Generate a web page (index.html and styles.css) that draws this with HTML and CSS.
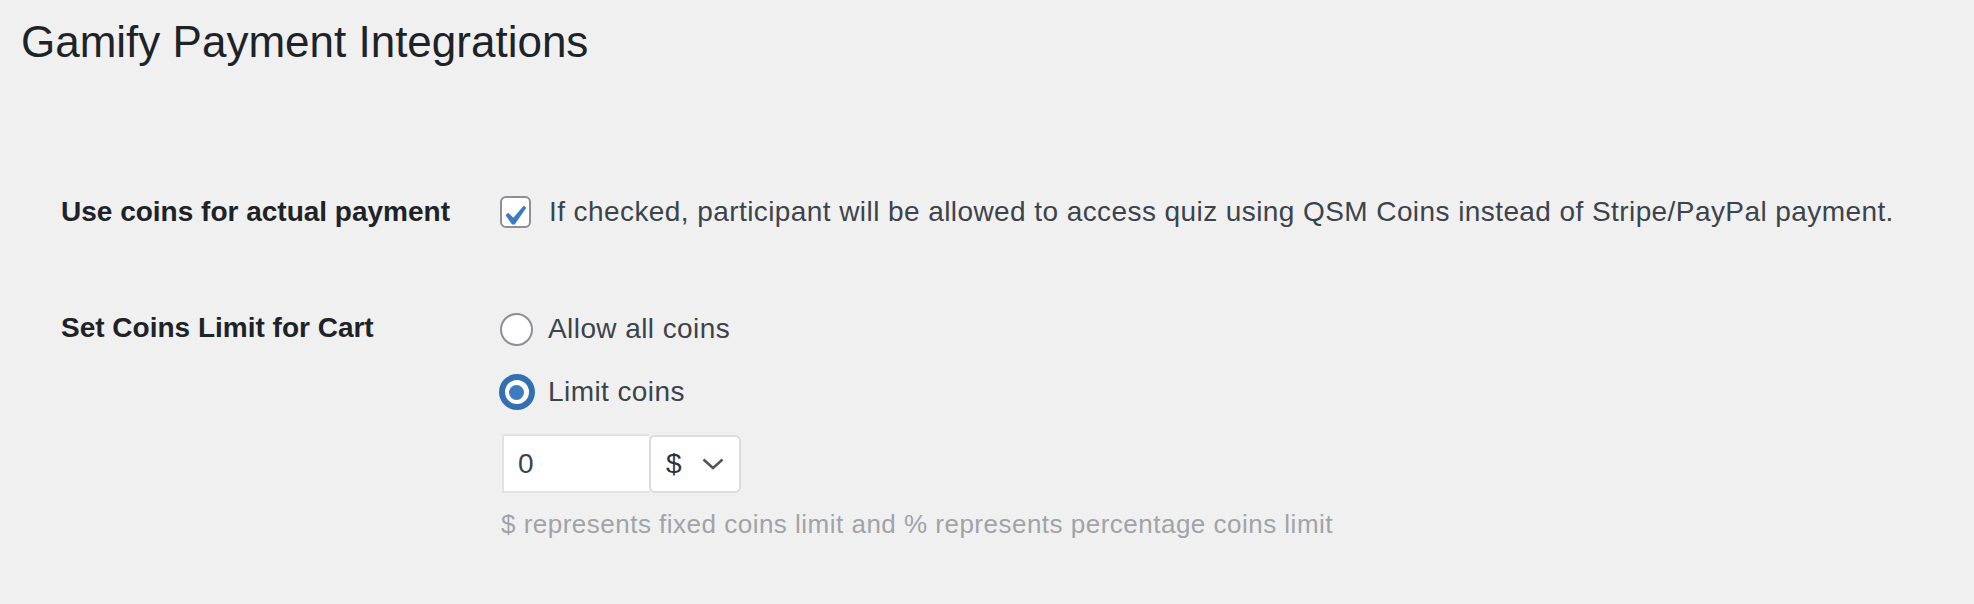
FILE: index.html
```html
<!DOCTYPE html>
<html lang="en">
<head>
<meta charset="utf-8">
<title>Gamify Payment Integrations</title>
<link rel="stylesheet" href="styles.css">
</head>
<body>
<div class="wrap">
  <h1 class="title">Gamify Payment Integrations</h1>
  <div class="form">
    <div class="row row-first">
      <div class="label">Use coins for actual payment</div>
      <div class="field">
        <label class="check">
          <span class="checkbox">
            <svg viewBox="0 0 20 20" width="40" height="40" aria-hidden="true"><path d="M14.83 4.89l1.34.94-5.81 8.38H9.02L5.78 9.67l1.34-1.25 2.57 2.4z" fill="#3a7bc2"/></svg>
          </span>
          <span class="text">If checked, participant will be allowed to access quiz using QSM Coins instead of Stripe/PayPal payment.</span>
        </label>
      </div>
    </div>
    <div class="row row-second">
      <div class="label">Set Coins Limit for Cart</div>
      <div class="field stack">
        <label class="option"><span class="radio"></span><span class="text">Allow all coins</span></label>
        <label class="option"><span class="radio checked"><span class="dot"></span></span><span class="text">Limit coins</span></label>
        <div class="group">
          <div class="input">0</div>
          <div class="select"><span class="sym">$</span>
            <svg class="chev" viewBox="0 0 22 12" width="22" height="12" aria-hidden="true"><path d="M1.5 1.5 L11 10 L20.5 1.5" fill="none" stroke="#50575e" stroke-width="2.6"/></svg>
          </div>
        </div>
        <div class="hint">$ represents fixed coins limit and % represents percentage coins limit</div>
      </div>
    </div>
  </div>
</div>
</body>
</html>
```
FILE: styles.css
```css
html, body {
  margin: 0;
  background: #f0f0f1;
}
body {
  font-family: "Liberation Sans", Arial, sans-serif;
  color: #3c434a;
  width: 1974px;
  height: 604px;
  overflow: hidden;
}
.wrap {
  padding: 12px 0 0 21px;
}
.title {
  margin: 0;
  font-size: 44px;
  line-height: 60px;
  font-weight: 400;
  color: #1d2327;
}
.form {
  margin: 120px 0 0 40px;
}
.row {
  display: grid;
  grid-template-columns: 440px 1fr;
}
.row-second {
  margin-top: 76px;
}
.label {
  font-size: 28px;
  line-height: 40px;
  font-weight: 700;
  color: #1d2327;
}
.field {
  font-size: 28px;
  line-height: 40px;
}
.field .text {
  letter-spacing: 0.42px;
}
.check, .option {
  display: flex;
  align-items: center;
  height: 40px;
}
.checkbox {
  position: relative;
  box-sizing: border-box;
  width: 31px;
  height: 32px;
  margin-left: -1px;
  border: 2px solid #8c8f94;
  border-radius: 6px;
  background: #fff;
  margin-right: 18px;
}
.checkbox svg {
  position: absolute;
  left: -8px;
  top: -2px;
  display: block;
}
.stack {
  padding-top: 1px;
  display: flex;
  flex-direction: column;
}
.option + .option {
  margin-top: 23px;
}
.radio {
  box-sizing: border-box;
  width: 33px;
  height: 33px;
  margin-left: -1px;
  margin-right: 15px;
  border: 2px solid #8c8f94;
  border-radius: 50%;
  background: #fff;
  display: flex;
  align-items: center;
  justify-content: center;
}
.radio.checked {
  width: 32px;
  height: 32px;
  margin-left: -0.5px;
  margin-right: 15.5px;
  border: 4px solid #3270b2;
  box-shadow: 0 0 0 2px #3270b2;
}
.dot {
  width: 15px;
  height: 15px;
  border-radius: 50%;
  background: #3e7cc0;
}
.group {
  display: flex;
  margin-top: 22px;
  margin-left: 1px;
}
.input {
  box-sizing: border-box;
  width: 147px;
  height: 59px;
  background: #fff;
  border: 2px solid #e2e2e4;
  border-right: none;
  padding-left: 14px;
  line-height: 55px;
  color: #3c434a;
}
.select {
  box-sizing: border-box;
  width: 92px;
  height: 58px;
  margin-top: 1px;
  background: #fff;
  border: 2px solid #dcdcde;
  border-radius: 6px;
  display: flex;
  align-items: center;
  padding-left: 15px;
  color: #2c3338;
}
.sym {
  line-height: 1;
}
.chev {
  display: block;
  margin-left: 20px;
}
.hint {
  margin-top: 13px;
  font-size: 26px;
  line-height: 36px;
  letter-spacing: 0.49px;
  color: #a0a3a8;
}
```
